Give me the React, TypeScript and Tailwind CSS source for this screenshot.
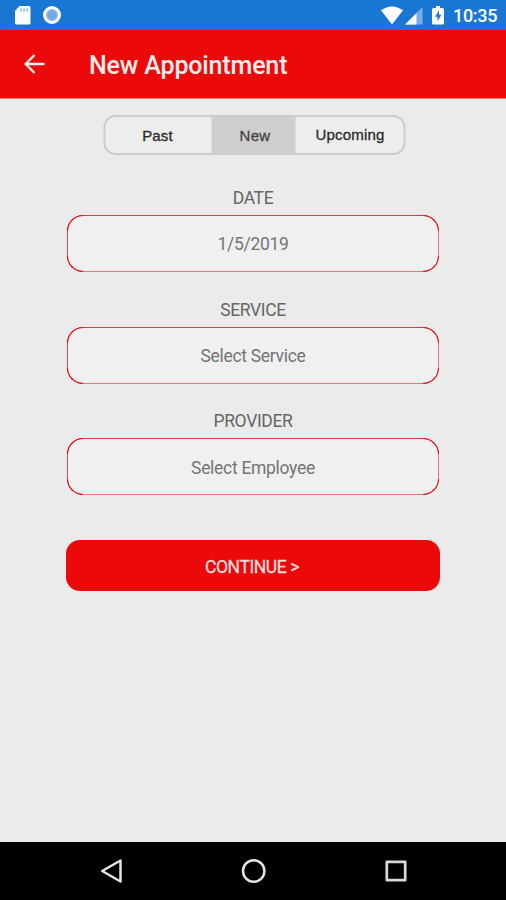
import React from 'react';

function StatusBar() {
  return (
    <div className="flex h-[30px] items-center justify-between bg-[#1976d2] text-white">
      <svg width="80" height="30" viewBox="0 0 80 30">
        <path d="M19.500 6H29a1.500 1.500 0 0 1 1.500 1.500v15.500A1.500 1.500 0 0 1 29 24.500H16.500A1.500 1.500 0 0 1 15 23V11z" fill="#fff" />
        <path d="M21 8.500v3M24 8.500v3M27 8.500v3" stroke="#1976d2" strokeWidth="1.400" opacity=".6" />
        <circle cx="52" cy="15" r="7.500" fill="#8ab8e8" stroke="#fff" strokeWidth="3" />
        <circle cx="52" cy="15" r="4.500" fill="#649fdd" opacity=".6" />
      </svg>
      <div className="flex h-full items-center">
        <svg width="78" height="30" viewBox="375 0 78 30">
          <path d="M381 10.200Q392 2.600 403 10.200L392 24.500z" fill="#fff" />
          <path d="M422.500 7v17.500H405z" fill="#75ade4" />
          <path d="M416.500 13v11.500H405z" fill="#fff" />
          <path d="M436 6h4v2h2.500a1.500 1.500 0 0 1 1.500 1.500V23a1.500 1.500 0 0 1-1.500 1.500h-9A1.500 1.500 0 0 1 432 23V9.500A1.500 1.500 0 0 1 433.500 8H436z" fill="#fff" />
          <path d="M439 10.500l-4 6.300h2.500v4.400l4-6.400H439z" fill="#1976d2" />
        </svg>
        <span className="w-[53px] pt-[2px] text-[18px] leading-[28px] font-medium tracking-[-0.300px]">10:35</span>
      </div>
    </div>
  );
}

function Header() {
  return (
    <header className="flex h-[69px] items-center border-b border-[#f07575] bg-[#ec0909] text-[#ffeded]">
      <svg className="ml-6 shrink-0" width="21" height="22" viewBox="0 0 21 22" fill="none" stroke="currentColor" strokeWidth="2.300">
        <path d="M20.500 11H2M10.500 2L1.700 11l8.800 9" />
      </svg>
      <h1 className="ml-[44px] pt-[4px] text-[25px] leading-[30px] font-medium tracking-[-0.150px] whitespace-nowrap">New Appointment</h1>
    </header>
  );
}

function Tabs() {
  return (
    <div className="mx-auto mt-[16px] flex h-[40px] w-[302px] translate-x-[1.500px] overflow-hidden rounded-[12px] border-2 border-[#cdcdcd] bg-[#ededed] font-['Liberation_Sans',sans-serif] text-[15px] text-[#292929] [-webkit-text-stroke:0.300px_currentColor]">
      <button className="w-[106px] pt-[2px] pr-[2px] tracking-[0.150px]">Past</button>
      <button className="w-[84px] bg-[#cecece] pt-[3px] pl-[3px] tracking-[0.300px] text-[#444]">New</button>
      <button className="flex-1 pl-px tracking-[0.200px]">Upcoming</button>
    </div>
  );
}

function Field({ label, value }: { label: string; value: string }) {
  return (
    <div className="flex flex-col">
      <span className="h-[27px] text-center text-[17.500px] leading-[20px] tracking-[-0.350px] text-[#666]">{label}</span>
      <div className="relative flex h-[57px] items-center justify-center rounded-[16px] border border-t-[#e0383e] border-r-[#e9787c] border-b-[#e47a80] border-l-[#e05055] bg-[#f0f0f0] pt-[2px] text-[17.500px] tracking-[-0.300px] text-[#747474]">
        <span className="absolute -top-px -left-px size-[16px] rounded-tl-[16px] border-t border-l border-[#e00f16]" />
        <span className="absolute -top-px -right-px size-[16px] rounded-tr-[16px] border-t border-r border-[#e00f16]" />
        <span className="absolute -bottom-px -left-px size-[16px] rounded-bl-[16px] border-b border-l border-[#e00f16]" />
        <span className="absolute -right-px -bottom-px size-[16px] rounded-br-[16px] border-r border-b border-[#e00f16]" />
        {value}
      </div>
    </div>
  );
}

function NavBar() {
  return (
    <nav className="flex h-[58px] items-center justify-between bg-black pr-[98px] pl-[100px]">
      <svg width="24" height="26" viewBox="0 0 24 26" fill="none" stroke="#e4e4e4" strokeWidth="2.500" strokeLinejoin="round">
        <path d="M2.200 13L20.500 2.500v21z" />
      </svg>
      <svg width="26" height="26" viewBox="0 0 26 26" fill="none" stroke="#e4e4e4" strokeWidth="2.500">
        <circle cx="12.700" cy="13" r="10.700" />
      </svg>
      <svg width="24" height="24" viewBox="0 0 24 24" fill="none" stroke="#d8d8d8" strokeWidth="2.700" strokeLinejoin="round">
        <rect x="2.800" y="2.800" width="18.400" height="18.400" />
      </svg>
    </nav>
  );
}

export default function App() {
  return (
    <div className="flex h-[900px] w-[506px] flex-col overflow-hidden bg-[#ebebeb] font-[Roboto,sans-serif]">
      <StatusBar />
      <Header />
      <main className="flex flex-1 flex-col">
        <Tabs />
        <div className="mt-[33px] ml-[67px] flex w-[372px] flex-col gap-[27.700px]">
          <Field label="DATE" value="1/5/2019" />
          <Field label="SERVICE" value="Select Service" />
          <Field label="PROVIDER" value="Select Employee" />
        </div>
        <button className="mt-[44.600px] ml-[66px] flex h-[51px] w-[374px] items-center justify-center rounded-[14px] bg-[#ec0909] pt-[4px] pr-[2px] text-[17.500px] tracking-[-0.400px] text-[#ffdede] [-webkit-text-stroke:0.300px_currentColor]">
          CONTINUE &gt;
        </button>
      </main>
      <NavBar />
    </div>
  );
}
